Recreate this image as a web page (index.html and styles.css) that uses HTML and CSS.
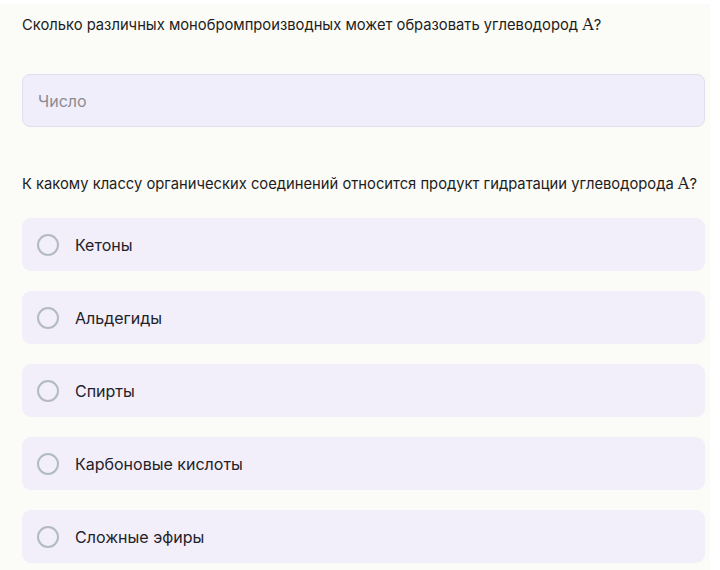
FILE: index.html
```html
<!DOCTYPE html>
<html lang="ru">
<head>
<meta charset="utf-8">
<link rel="stylesheet" href="styles.css">
</head>
<body>
<div class="panel">
  <p class="question">Сколько различных монобромпроизводных может образовать углеводород <span class="math">A</span>?</p>
  <div class="input"><span class="placeholder">Число</span></div>
  <p class="question q2">К какому классу органических соединений относится продукт гидратации углеводорода <span class="math">A</span>?</p>
  <div class="options">
    <div class="option"><span class="radio"></span><span class="label">Кетоны</span></div>
    <div class="option"><span class="radio"></span><span class="label">Альдегиды</span></div>
    <div class="option"><span class="radio"></span><span class="label">Спирты</span></div>
    <div class="option"><span class="radio"></span><span class="label">Карбоновые кислоты</span></div>
    <div class="option"><span class="radio"></span><span class="label">Сложные эфиры</span></div>
  </div>
</div>
</body>
</html>
```
FILE: styles.css
```css
html, body { margin: 0; padding: 0; background: #ffffff; }
body { font-family: Inter, "Noto Sans", sans-serif; color: #1f1f24; }
.panel {
  margin-top: 4px;
  width: 710px;
  height: 566px;
  background: #fbfbf7;
  box-sizing: border-box;
  padding: 12px 5px 0 22px;
}
.question {
  margin: 0;
  font-size: 14.75px;
  line-height: 18px;
  color: #1d1d22;
}
.math {
  font-family: "DejaVu Serif", "Liberation Serif", serif;
  font-size: 16px;
}
.input {
  margin-top: 40px;
  height: 53px;
  box-sizing: border-box;
  border: 1px solid #e1dfee;
  border-radius: 8px;
  background: #f0eefa;
  display: flex;
  align-items: center;
  padding-left: 15px;
}
.placeholder { font-size: 16px; color: #8b8b92; }
.q2 { margin-top: 48px; }
.options {
  margin-top: 25px;
  display: flex;
  flex-direction: column;
  gap: 20px;
}
.option {
  height: 53px;
  border-radius: 9px;
  background: #f2eefa;
  display: flex;
  align-items: center;
  padding-left: 15px;
}
.radio {
  width: 22px;
  height: 22px;
  box-sizing: border-box;
  border: 2px solid #b3bac6;
  border-radius: 50%;
  margin-right: 16px;
}
.label { font-size: 16px; color: #222228; }
```
